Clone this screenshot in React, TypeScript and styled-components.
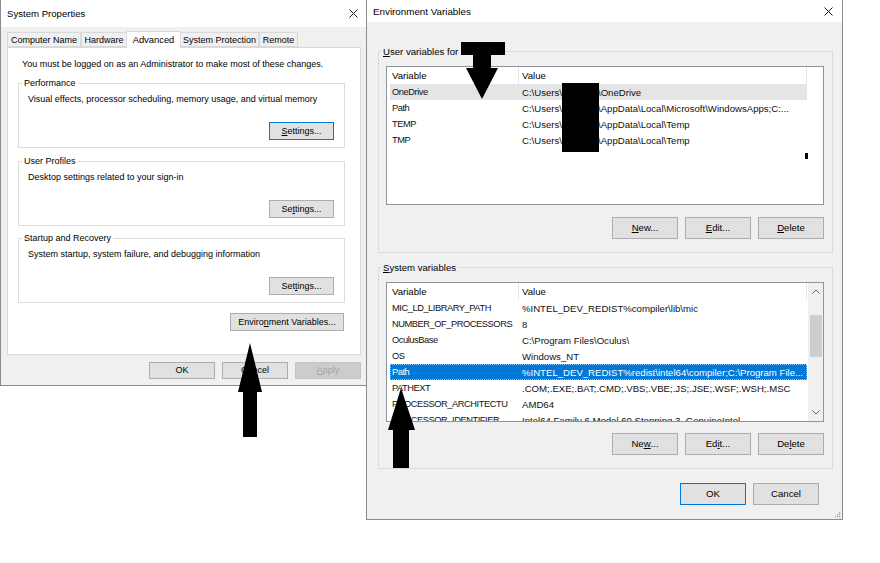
import React from 'react';
import styled, { createGlobalStyle } from 'styled-components';

const GlobalStyle = createGlobalStyle`
  html, body { margin: 0; padding: 0; background: #ffffff; }
  body { font-family: "Liberation Sans", Arial, sans-serif; color: #000; }
  * { box-sizing: border-box; }
`;

const Desktop = styled.div`
  position: relative;
  width: 880px;
  height: 563px;
  background: #ffffff;
  overflow: hidden;
`;

const Window = styled.div<{ $x: number; $y: number; $w: number; $h: number; $z: number; $fs: number }>`
  position: absolute;
  left: ${p => p.$x}px;
  top: ${p => p.$y}px;
  width: ${p => p.$w}px;
  height: ${p => p.$h}px;
  z-index: ${p => p.$z};
  background: #f0f0f0;
  border: 1px solid #8c8c8c;
  border-top: none;
  display: flex;
  flex-direction: column;
  font-size: ${p => p.$fs}px;
`;

const TitleBar = styled.div<{ $h: number; $fs: number }>`
  height: ${p => p.$h}px;
  flex: none;
  background: #ffffff;
  display: flex;
  align-items: center;
  justify-content: space-between;
  padding: 0 9px 0 6px;
  font-size: ${p => p.$fs}px;
`;

const Title = styled.span`
  color: #000;
  white-space: nowrap;
`;

const CloseIcon = () => (
  <svg width="9" height="9" viewBox="0 0 9 9">
    <path d="M0.5 0.5 L8.5 8.5 M8.5 0.5 L0.5 8.5" stroke="#1a1a1a" strokeWidth="1" fill="none" />
  </svg>
);

/* ---------- System Properties ---------- */

const SysBody = styled.div`
  flex: 1;
  display: flex;
  flex-direction: column;
  padding: 3px 6px 0 6px;
`;

const TabStrip = styled.div`
  display: flex;
  align-items: flex-end;
  height: 17px;
  position: relative;
  z-index: 1;
`;

const Tab = styled.div<{ $active?: boolean; $w: number }>`
  width: ${p => p.$w}px;
  height: ${p => (p.$active ? 17 : 15)}px;
  margin-bottom: ${p => (p.$active ? -1 : 0)}px;
  background: ${p => (p.$active ? '#ffffff' : '#f0f0f0')};
  border: 1px solid #d9d9d9;
  border-bottom: ${p => (p.$active ? 'none' : '1px solid #d9d9d9')};
  margin-left: ${p => (p.$active ? -1 : 0)}px;
  margin-right: ${p => (p.$active ? -1 : 0)}px;
  display: flex;
  align-items: center;
  justify-content: center;
  white-space: nowrap;
  font-size: ${p => (p.$active ? 9.4 : 9)}px;
  padding-bottom: ${p => (p.$active ? 2 : 0)}px;
`;

const TabPanel = styled.div`
  width: 354px;
  height: 308px;
  background: #ffffff;
  border: 1px solid #d9d9d9;
  display: flex;
  flex-direction: column;
  padding: 10px 15px 0 10px;
`;

const Notice = styled.div`
  line-height: 12px;
  margin-left: 4px;
  white-space: nowrap;
`;

const Group = styled.fieldset<{ $mt: number; $pad: string }>`
  margin: ${p => p.$mt}px 0 0 0;
  padding: ${p => p.$pad};
  border: 1px solid #dcdcdc;
  min-width: 0;
  display: flex;
  flex-direction: column;
`;

const GroupLegend = styled.legend<{ $lh: number }>`
  padding: 0 2px;
  margin-left: -5px;
  line-height: ${p => p.$lh}px;
  white-space: nowrap;
`;

const GroupText = styled.div`
  line-height: 12px;
  margin-top: 4px;
  margin-left: 1px;
  white-space: nowrap;
`;

const Btn = styled.button<{ $w: number; $h: number; $focus?: boolean; $off?: boolean }>`
  flex: none;
  width: ${p => p.$w}px;
  height: ${p => p.$h}px;
  padding: 0;
  margin: 0;
  font: inherit;
  line-height: 1;
  color: ${p => (p.$off ? '#a3a3a3' : '#000')};
  background: ${p => (p.$off ? '#cccccc' : '#e1e1e1')};
  border: 1px solid ${p => (p.$focus ? '#0078d7' : p.$off ? '#c4c4c4' : '#adadad')};
  display: flex;
  align-items: center;
  justify-content: center;
  white-space: nowrap;
`;

const GroupButtonRow = styled.div<{ $mt: number }>`
  display: flex;
  justify-content: flex-end;
  margin-top: ${p => p.$mt}px;
`;

const EnvRow = styled.div`
  display: flex;
  justify-content: flex-end;
  margin-top: 10px;
  padding-right: 1px;
`;

const DialogButtons = styled.div<{ $mt: number; $pr: number }>`
  display: flex;
  justify-content: flex-end;
  gap: 7px;
  margin-top: ${p => p.$mt}px;
  padding-right: ${p => p.$pr}px;
`;

/* ---------- Environment Variables ---------- */

const EnvBody = styled.div`
  flex: 1;
  display: flex;
  flex-direction: column;
  padding: 23px 9px 0 11px;
  position: relative;
`;

const ListBox = styled.div<{ $h: number; $mt: number }>`
  height: ${p => p.$h}px;
  margin-top: ${p => p.$mt}px;
  border: 1px solid #8f949b;
  background: #ffffff;
  display: flex;
  overflow: hidden;
`;

const ListMain = styled.div`
  flex: 1;
  min-width: 0;
  display: flex;
  flex-direction: column;
  padding-left: 3px;
  overflow: hidden;
`;

const HeaderRow = styled.div`
  flex: none;
  display: flex;
  width: 417px;
  height: 17px;
  align-items: center;
  border-right: 1px solid #e5e5e5;
`;

const HeaderCell = styled.div<{ $w?: number; $divider?: boolean }>`
  ${p => (p.$w ? `width: ${p.$w}px; flex: none;` : 'flex: 1;')}
  height: 100%;
  display: flex;
  align-items: center;
  padding-left: ${p => (p.$divider ? 3 : 2)}px;
  border-left: ${p => (p.$divider ? '1px solid #e5e5e5' : 'none')};
  white-space: nowrap;
`;

const Row = styled.div<{ $sel?: 'none' | 'soft' | 'active' }>`
  flex: none;
  display: flex;
  width: 417px;
  height: 16px;
  align-items: center;
  background: ${p => (p.$sel === 'active' ? '#0078d7' : p.$sel === 'soft' ? '#e5e5e5' : 'transparent')};
  color: ${p => (p.$sel === 'active' ? '#ffffff' : '#111')};
  outline: ${p => (p.$sel === 'active' ? '1px dotted #8fc2ee' : 'none')};
  outline-offset: -1px;
`;

const NameCell = styled.div`
  width: 128px;
  flex: none;
  padding-left: 2px;
  overflow: hidden;
  white-space: nowrap;
  font-size: 9.3px;
  letter-spacing: -0.45px;
`;

const ValueCell = styled.div`
  flex: 1;
  min-width: 0;
  padding-left: 4px;
  overflow: hidden;
  white-space: nowrap;
`;

const Masked = styled.span`
  display: inline-block;
  width: 36px;
`;

const ScrollBar = styled.div`
  width: 15px;
  flex: none;
  background: #f0f0f0;
  border-left: 1px solid #f0f0f0;
  display: flex;
  flex-direction: column;
`;

const ScrollArrow = styled.div`
  height: 17px;
  flex: none;
  display: flex;
  align-items: center;
  justify-content: center;
`;

const ScrollTrack = styled.div`
  flex: 1;
  display: flex;
  flex-direction: column;
  padding: 15px 1px 0 1px;
`;

const ScrollThumb = styled.div`
  height: 42px;
  background: #cdcdcd;
`;

const ButtonRow = styled.div<{ $mt: number; $pr: number }>`
  display: flex;
  justify-content: flex-end;
  gap: 7px;
  margin-top: ${p => p.$mt}px;
  padding-right: ${p => p.$pr}px;
`;

const Grip = styled.svg`
  position: absolute;
  right: 1px;
  bottom: 1px;
`;

/* ---------- Overlay annotations ---------- */

const Overlay = styled.svg`
  position: absolute;
  left: 0;
  top: 0;
  z-index: 10;
  pointer-events: none;
`;

const Chevron = ({ up }: { up?: boolean }) => (
  <svg width="8" height="5" viewBox="0 0 8 5">
    <path d={up ? 'M0.5 4.5 L4 1 L7.5 4.5' : 'M0.5 0.5 L4 4 L7.5 0.5'} stroke="#606060" strokeWidth="1" fill="none" />
  </svg>
);

const tabs = [
  { label: 'Computer Name', w: 74 },
  { label: 'Hardware', w: 46 },
  { label: 'Advanced', w: 55, active: true },
  { label: 'System Protection', w: 79 },
  { label: 'Remote', w: 39 },
];

const userVars = [
  { name: 'OneDrive', pre: 'C:\\Users\\', post: '\\OneDrive', sel: 'soft' as const },
  { name: 'Path', pre: 'C:\\Users\\', post: '\\AppData\\Local\\Microsoft\\WindowsApps;C:...' },
  { name: 'TEMP', pre: 'C:\\Users\\', post: '\\AppData\\Local\\Temp' },
  { name: 'TMP', pre: 'C:\\Users\\', post: '\\AppData\\Local\\Temp' },
];

const sysVars: { name: string; value: string; sel?: 'active' }[] = [
  { name: 'MIC_LD_LIBRARY_PATH', value: '%INTEL_DEV_REDIST%compiler\\lib\\mic' },
  { name: 'NUMBER_OF_PROCESSORS', value: '8' },
  { name: 'OculusBase', value: 'C:\\Program Files\\Oculus\\' },
  { name: 'OS', value: 'Windows_NT' },
  { name: 'Path', value: '%INTEL_DEV_REDIST%redist\\intel64\\compiler;C:\\Program File...', sel: 'active' },
  { name: 'PATHEXT', value: '.COM;.EXE;.BAT;.CMD;.VBS;.VBE;.JS;.JSE;.WSF;.WSH;.MSC' },
  { name: 'PROCESSOR_ARCHITECTU', value: 'AMD64' },
  { name: 'PROCESSOR_IDENTIFIER', value: 'Intel64 Family 6 Model 60 Stepping 3, GenuineIntel' },
];

export default function App() {
  return (
    <>
      <GlobalStyle />
      <Desktop>
        {/* System Properties */}
        <Window $x={0} $y={0} $w={368} $h={386} $z={1} $fs={9}>
          <TitleBar $h={27} $fs={9.6}>
            <Title>System Properties</Title>
            <CloseIcon />
          </TitleBar>
          <SysBody>
            <TabStrip>
              {tabs.map(t => (
                <Tab key={t.label} $w={t.w} $active={t.active}>
                  {t.label}
                </Tab>
              ))}
            </TabStrip>
            <TabPanel>
              <Notice>You must be logged on as an Administrator to make most of these changes.</Notice>
              <Group $mt={7} $pad="0 10px 7px 8px">
                <GroupLegend $lh={12}>Performance</GroupLegend>
                <GroupText>Visual effects, processor scheduling, memory usage, and virtual memory</GroupText>
                <GroupButtonRow $mt={17}>
                  <Btn $w={65} $h={18} $focus>
                    <u>S</u>ettings...
                  </Btn>
                </GroupButtonRow>
              </Group>
              <Group $mt={7} $pad="0 10px 7px 8px">
                <GroupLegend $lh={12}>User Profiles</GroupLegend>
                <GroupText>Desktop settings related to your sign-in</GroupText>
                <GroupButtonRow $mt={17}>
                  <Btn $w={65} $h={18}>
                    Se<u>t</u>tings...
                  </Btn>
                </GroupButtonRow>
              </Group>
              <Group $mt={6} $pad="0 10px 7px 8px">
                <GroupLegend $lh={12}>Startup and Recovery</GroupLegend>
                <GroupText>System startup, system failure, and debugging information</GroupText>
                <GroupButtonRow $mt={17}>
                  <Btn $w={65} $h={18}>
                    Set<u>t</u>ings...
                  </Btn>
                </GroupButtonRow>
              </Group>
              <EnvRow>
                <Btn $w={114} $h={18}>
                  Enviro<u>n</u>ment Variables...
                </Btn>
              </EnvRow>
            </TabPanel>
            <DialogButtons $mt={7} $pr={0}>
              <Btn $w={66} $h={17}>OK</Btn>
              <Btn $w={66} $h={17}>Cancel</Btn>
              <Btn $w={66} $h={17} $off>
                <u>A</u>pply
              </Btn>
            </DialogButtons>
          </SysBody>
        </Window>

        {/* Environment Variables */}
        <Window $x={366} $y={0} $w={477} $h={520} $z={2} $fs={9.6}>
          <TitleBar $h={22} $fs={9.8}>
            <Title>Environment Variables</Title>
            <CloseIcon />
          </TitleBar>
          <EnvBody>
            <Group $mt={0} $pad="0 8px 13px 7px">
              <GroupLegend $lh={13}>
                <u>U</u>ser variables for
              </GroupLegend>
              <ListBox $h={139} $mt={8}>
                <ListMain>
                  <HeaderRow>
                    <HeaderCell $w={128}>Variable</HeaderCell>
                    <HeaderCell $divider>Value</HeaderCell>
                  </HeaderRow>
                  {userVars.map(v => (
                    <Row key={v.name} $sel={v.sel ?? 'none'}>
                      <NameCell>{v.name}</NameCell>
                      <ValueCell>
                        {v.pre}
                        <Masked />
                        {v.post}
                      </ValueCell>
                    </Row>
                  ))}
                </ListMain>
              </ListBox>
              <ButtonRow $mt={12} $pr={0}>
                <Btn $w={66} $h={22}>
                  <u>N</u>ew...
                </Btn>
                <Btn $w={66} $h={22}>
                  <u>E</u>dit...
                </Btn>
                <Btn $w={66} $h={22}>
                  <u>D</u>elete
                </Btn>
              </ButtonRow>
            </Group>

            <Group $mt={8} $pad="0 8px 13px 7px">
              <GroupLegend $lh={13}>
                <u>S</u>ystem variables
              </GroupLegend>
              <ListBox $h={140} $mt={8}>
                <ListMain>
                  <HeaderRow>
                    <HeaderCell $w={128}>Variable</HeaderCell>
                    <HeaderCell $divider>Value</HeaderCell>
                  </HeaderRow>
                  {sysVars.map(v => (
                    <Row key={v.name + v.value} $sel={v.sel ?? 'none'}>
                      <NameCell>{v.name}</NameCell>
                      <ValueCell>{v.value}</ValueCell>
                    </Row>
                  ))}
                </ListMain>
                <ScrollBar>
                  <ScrollArrow>
                    <Chevron up />
                  </ScrollArrow>
                  <ScrollTrack>
                    <ScrollThumb />
                  </ScrollTrack>
                  <ScrollArrow>
                    <Chevron />
                  </ScrollArrow>
                </ScrollBar>
              </ListBox>
              <ButtonRow $mt={11} $pr={0}>
                <Btn $w={66} $h={22}>
                  Ne<u>w</u>...
                </Btn>
                <Btn $w={66} $h={22}>
                  Ed<u>i</u>t...
                </Btn>
                <Btn $w={66} $h={22}>
                  De<u>l</u>ete
                </Btn>
              </ButtonRow>
            </Group>

            <DialogButtons $mt={14} $pr={14}>
              <Btn $w={66} $h={22} $focus>
                OK
              </Btn>
              <Btn $w={66} $h={22}>
                Cancel
              </Btn>
            </DialogButtons>
            <Grip width="7" height="7" viewBox="0 0 7 7">
              <rect x="5" y="1" width="1.2" height="1.2" fill="#a0a0a0" />
              <rect x="3" y="3" width="1.2" height="1.2" fill="#a0a0a0" />
              <rect x="5" y="3" width="1.2" height="1.2" fill="#a0a0a0" />
              <rect x="1" y="5" width="1.2" height="1.2" fill="#a0a0a0" />
              <rect x="3" y="5" width="1.2" height="1.2" fill="#a0a0a0" />
              <rect x="5" y="5" width="1.2" height="1.2" fill="#a0a0a0" />
            </Grip>
          </EnvBody>
        </Window>

        <Overlay width="880" height="563" viewBox="0 0 880 563">
          {/* redactions */}
          <rect x="461" y="42" width="44" height="13" fill="#000" />
          <rect x="562" y="83" width="37" height="69" fill="#000" />
          <rect x="805" y="153" width="3" height="6" fill="#000" />
          {/* arrow pointing down to user variables */}
          <rect x="473" y="42" width="18" height="27" fill="#000" />
          <polygon points="466,68 498,68 482,99" fill="#000" />
          {/* arrow pointing up to Environment Variables button */}
          <polygon points="250,343 262,392 238,392" fill="#000" />
          <rect x="243" y="391" width="14" height="46" fill="#000" />
          {/* arrow pointing up to Path row */}
          <polygon points="401,388 415,430 388,430" fill="#000" />
          <rect x="393" y="429" width="16" height="39" fill="#000" />
        </Overlay>
      </Desktop>
    </>
  );
}
